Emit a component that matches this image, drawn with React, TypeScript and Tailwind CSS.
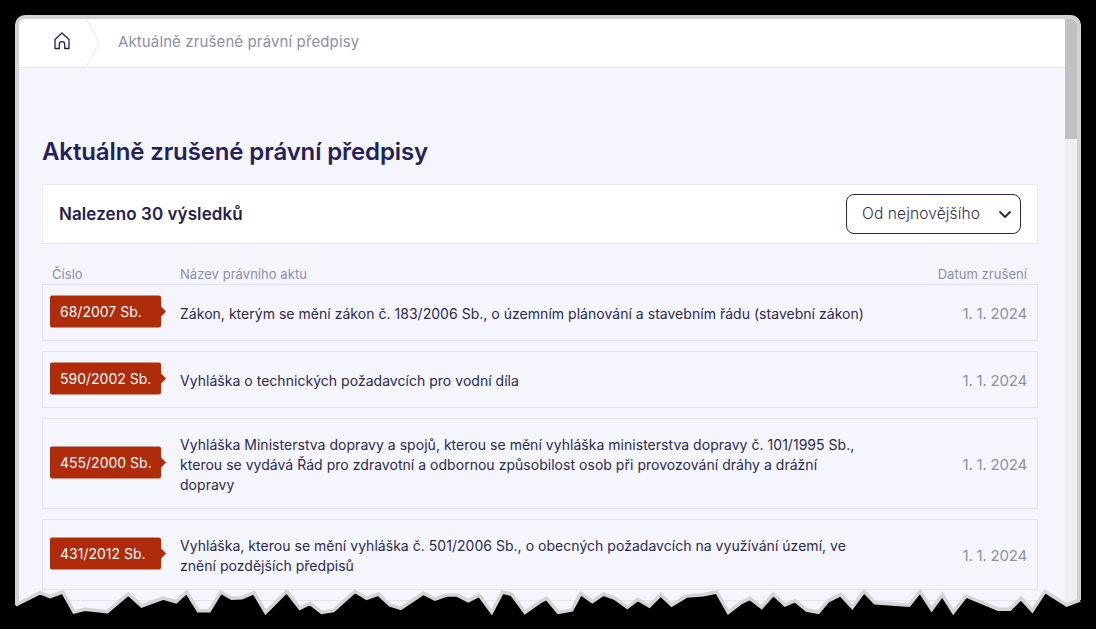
const font = { fontFamily: '"Inter", "Noto Sans", sans-serif' };

const rows = [
  {
    id: "68/2007 Sb.",
    title: "Zákon, kterým se mění zákon č. 183/2006 Sb., o územním plánování a stavebním řádu (stavební zákon)",
  },
  { id: "590/2002 Sb.", title: "Vyhláška o technických požadavcích pro vodní díla" },
  {
    id: "455/2000 Sb.",
    title:
      "Vyhláška Ministerstva dopravy a spojů, kterou se mění vyhláška ministerstva dopravy č. 101/1995 Sb., kterou se vydává Řád pro zdravotní a odbornou způsobilost osob při provozování dráhy a drážní dopravy",
  },
  {
    id: "431/2012 Sb.",
    title:
      "Vyhláška, kterou se mění vyhláška č. 501/2006 Sb., o obecných požadavcích na využívání území, ve znění pozdějších předpisů",
  },
];

const tear =
  "15.7,605 40,592.7 50,596.7 62.7,592 74,612 85,609.3 107.3,611.7 128.3,594 141.7,606 163.3,598 176,601.7 186.7,592 198.3,610.7 209.3,610.7 220.7,592 231.7,598.3 241.7,597.7 254,592.7 265.7,612.3 286.7,591.3 300,608.3 310,603.3 321.7,612.3 333.3,610.7 355,591.3 366.7,598.3 378.3,594 390,605 400.7,608.3 423.3,593.3 435,599 446.7,595 456.7,595 468.3,600.7 479.3,595.3 491.7,612.3 502.3,592 511.7,594.3 525,612.3 540,601.7 546.7,598.3 558.3,612.3 571.7,610 580.7,593.3 592.3,601.7 603.3,594 615,598.3 627.3,607.3 637.7,599.3 649.3,606 660.7,594.7 671.7,605 686.7,596 703.3,594.7 716.7,592 728.3,612.3 740,603.3 750,598.3 761.7,607.3 773.3,594 785,605 795,600.7 806.7,610 818.3,612.3 828.3,600.7 840.7,594.7 852.3,607.3 864,591.3 875,602.7 909,605.3 920,591.3 931.7,609.3 942.3,594.7 953.3,612.3 966,596 998.3,609.3 1010,609.3 1021,598.3 1032.3,610.7 1045,591.3 1066.7,605 1080,600";

export default function App() {
  return (
    <div className="relative h-[629px] w-[1096px] overflow-hidden bg-black pl-[15px] pt-[15px]" style={font}>
      <div className="flex h-[614px] w-[1066px] overflow-hidden rounded-[10px] border-4 border-[#d2d2d2] bg-[#f4f5fd]">
        <main className="min-w-0 flex-1">
          <div className="flex h-[49px] items-center border-b border-[#e6e7ef] bg-white">
            <div className="relative flex h-full w-[81px] items-center justify-center">
              <svg width="18" height="18" viewBox="0 0 18 18" fill="none" stroke="#24214f" strokeWidth="1.3" strokeLinejoin="round" className="mb-[4px] ml-[4px]">
                <path d="M2 16.5V7.5L9 1l7 6.5v9h-4.3v-4.2a2.7 2.7 0 0 0-5.4 0v4.2H2Z" />
              </svg>
              <svg width="15" height="48" viewBox="0 0 15 48" fill="none" stroke="#e8e9f0" className="absolute left-[67px] top-0">
                <path d="M0 0l13.5 24L0 48" />
              </svg>
            </div>
            <span className="mb-[2px] ml-[18px] text-[15px] tracking-[0.12px] text-[#8d8ea6]">Aktuálně zrušené právní předpisy</span>
          </div>

          <div className="pl-[23px] pr-[27px] pt-[68px]">
            <h1 className="mb-[16px] text-[24px] font-semibold leading-[32px] tracking-[-0.12px] text-[#23205c]">
              Aktuálně zrušené právní předpisy
            </h1>

            <div className="flex h-[60px] items-center justify-between border border-[#e9eaf2] bg-white pl-[16px] pr-[16px]">
              <span className="pt-[2px] text-[17px] font-semibold tracking-[0.08px] text-[#24214f]">Nalezeno 30 výsledků</span>
              <div className="flex h-[40px] w-[175px] items-center justify-between rounded-[8px] border border-[#2a2750] pl-[15px] pr-[8px]">
                <span className="text-[15.5px] font-light tracking-[0.13px] text-[#2f2c52]">Od nejnovějšího</span>
                <svg width="14" height="9" viewBox="0 0 14 9" fill="none" stroke="#24214f" strokeWidth="1.8">
                  <path d="M1.5 1.5 7 7l5.5-5.5" />
                </svg>
              </div>
            </div>

            <div className="mb-[2px] mt-[22px] flex h-[16px] items-center justify-between pl-[10px] pr-[11px] text-[13px] leading-[16px] tracking-[0.05px] text-[#8d8ea6]">
              <div className="flex">
                <span className="w-[128px]">Číslo</span>
                <span>Název právního aktu</span>
              </div>
              <span>Datum zrušení</span>
            </div>

            <div className="flex flex-col gap-[10px]">
              {rows.map((row) => (
                <div key={row.id} className="flex min-h-[57px] items-center border border-[#e2e3ef] py-[14px] pl-[7px] pr-[10px]">
                  <div className="relative -my-[4px] flex h-[32px] w-[111px] shrink-0 -translate-y-[1.5px] items-center rounded-[2px] bg-[#ae2c0a] pl-[10px] text-[14px] text-white">
                    {row.id}
                    <span className="absolute -right-[5px] top-[11px] h-0 w-0 border-y-[5px] border-l-[5px] border-y-transparent border-l-[#ae2c0a]" />
                  </div>
                  <p className="ml-[19px] w-[690px] translate-y-[1px] pt-[1px] text-[14px] leading-[20px] tracking-[0.03px] text-[#2d2a4d]">{row.title}</p>
                  <span className="ml-auto translate-y-[1px] pt-[2px] text-[15px] tracking-[-0.2px] text-[#8f90a6]">1. 1. 2024</span>
                </div>
              ))}
              <div className="h-[57px] border border-[#e2e3ef]" />
            </div>
          </div>
        </main>

        <div className="w-[12px] shrink-0 bg-[#f0f0f0]">
          <div className="h-[120px] bg-[#c1c1c1]" />
        </div>
      </div>

      <svg width="1096" height="629" viewBox="0 0 1096 629" className="pointer-events-none absolute left-0 top-0">
        <polygon points={`0,605 ${tear} 1096,600 1096,629 0,629`} fill="#000" />
        <polyline points={tear} fill="none" stroke="#d4d4d4" strokeWidth="3.5" strokeLinejoin="miter" />
      </svg>
    </div>
  );
}
